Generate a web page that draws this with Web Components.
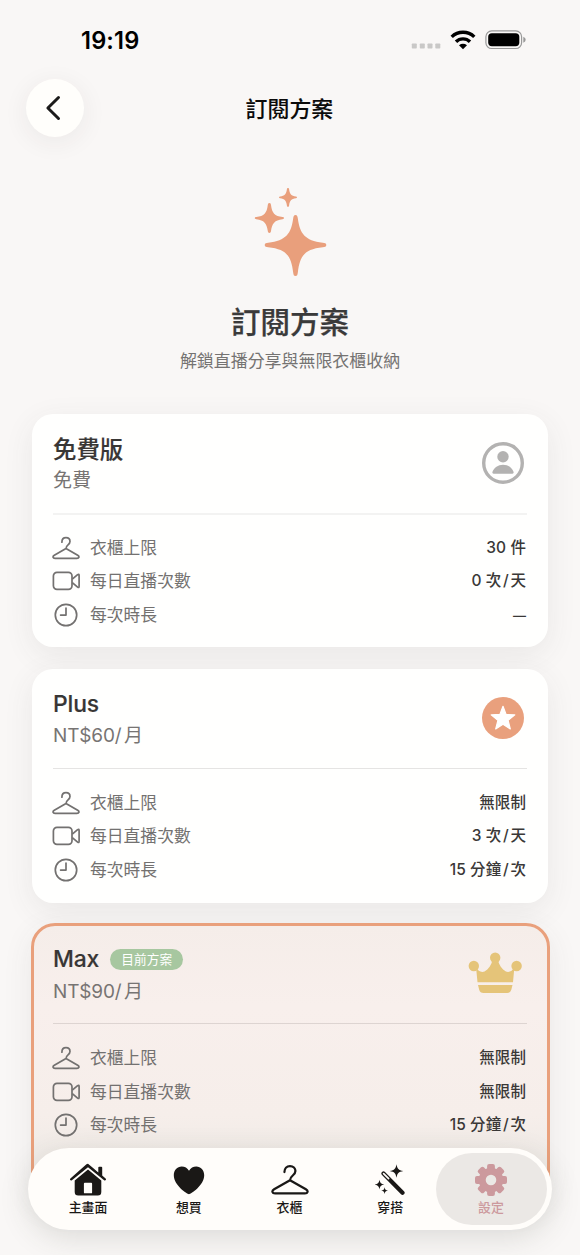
<!DOCTYPE html>
<html lang="zh-Hant">
<head>
<meta charset="utf-8">
<title>訂閱方案</title>
<style>
html,body{margin:0;height:1255px;overflow:hidden;background:#f9f7f6}
body{font-family:Inter,"Noto Sans CJK TC",sans-serif;color:#3a3a3a}
</style>
</head>
<body>
<subscription-screen></subscription-screen>
<script>
const define = (name, html) => customElements.define(name, class extends HTMLElement {
  constructor() {
    super();
    const t = document.createElement('template');
    t.innerHTML = typeof html === 'function' ? html(this) : html;
    this.attachShadow({mode: 'open'}).append(t.content.cloneNode(true));
  }
});

const hangerPath = '<path d="M9.9 6.2C9.9 3.4 11.6 1.6 14 1.6c2.4 0 4 1.7 4 3.8 0 3.5-4 3.3-4 7L2.3 19.3C.2 20.6.9 22.4 3 22.4h22c2.1 0 2.8-1.8.7-3.1L14 12.4" fill="none" stroke="currentColor" stroke-linecap="round" stroke-linejoin="round"/>';
const tooth = [0,45,90,135,180,225,270,315].map(a => `<rect x="12.1" y="0" width="7.8" height="9" rx="2" transform="rotate(${a} 16 16)"/>`).join('');
const icons = {
  hanger: [28, 24, `<g stroke-width="1.7">${hangerPath}</g>`],
  hangerLarge: [38, 32, `<g transform="scale(1.357 1.31)" stroke-width="1.65">${hangerPath}</g>`],
  video: [28, 20, '<g fill="none" stroke="currentColor" stroke-width="1.7" stroke-linejoin="round"><rect x="1.400" y="1.400" width="18.600" height="17" rx="3.600"/><path d="M20.300 8.200 25.600 3.700Q27.100 2.600 27.100 4.500V15.300Q27.100 17.200 25.600 16.100L20.300 11.600"/></g>'],
  clock: [24, 24, '<g fill="none" stroke="currentColor" stroke-width="1.7" stroke-linecap="round" stroke-linejoin="round"><circle cx="12" cy="12" r="10.7"/><path d="M12 5v7.1H6.6"/></g>'],
  person: [42, 42, '<circle cx="21" cy="21" r="19.3" fill="none" stroke="currentColor" stroke-width="3.400"/><circle cx="21" cy="14.7" r="5.7" fill="currentColor"/><path d="M11.6 31.7c-1.2 0-1.5-.9-1-2.1 1.4-4 5.500-6.900 10.400-6.900s9 2.900 10.400 6.900c.5 1.200.2 2.100-1 2.100z" fill="currentColor"/>'],
  star: [42, 42, '<circle cx="21" cy="21" r="21" fill="currentColor"/><path d="m21 9.300 3.100 8.100 8.700.5-6.700 5.500 2.200 8.500-7.300-4.700-7.300 4.700 2.200-8.500-6.700-5.500 8.700-.5z" fill="#fff" stroke="#fff" stroke-width="1.200" stroke-linejoin="round"/>'],
  crown: [54, 42, '<g fill="currentColor"><circle cx="5.800" cy="14" r="5.200"/><circle cx="27.200" cy="5.700" r="5.200"/><circle cx="48.600" cy="14" r="5.200"/><path d="M8 15c2 4 4.800 5.700 8.500 4.600 4-2.600 7-6.500 8-11.600h5.400c1 5.100 4 9 8 11.600 3.700 1.100 6.500-.6 8.500-4.600L45 30.300H9.500zM10 33h34.500l-1.200 4.700q-.9 3.300-4.300 3.300H15.500q-3.400 0-4.300-3.300z"/></g>'],
  sparkles: [74, 90, '<g fill="currentColor"><path d="M41.500 28c1.700 0 2 1.300 2.300 3.300 2 15.200 7 22.500 25 24.400 2 .2 3.500.7 3.500 2.300s-1.500 2.100-3.500 2.300c-18 2-23 8.200-25 25.400-.3 2-.600 3.300-2.300 3.300s-2-1.300-2.300-3.300c-2-17.200-7-23.400-25-25.400-2-.2-3.500-.7-3.500-2.300s1.500-2.100 3.500-2.300c18-1.900 23-9.200 25-24.400.3-2 .600-3.300 2.300-3.300zM15.400 16c1.200 0 1.400.9 1.600 2 1 8 3.600 11.200 11.500 12 .9.100 1.500.4 1.500 1.100s-.600 1-1.500 1.100c-7.900.8-10.500 4.300-11.500 11.900-.2 1.100-.4 1.900-1.600 1.900s-1.400-.8-1.600-1.900c-1-7.600-3.600-11.100-11.500-11.900C1.400 32.100.8 31.800.8 31.100s.600-1 1.500-1.100c7.900-.8 10.500-4 11.500-12 .2-1.100.4-2 1.600-2zM34 1c.8 0 1 .6 1.100 1.300.6 4.700 2.200 6.600 6.800 7.200.700.100 1.100.4 1.100.900s-.4.800-1.100.900c-4.600.600-6.200 2.500-6.800 7.200-.1.700-.3 1.300-1.100 1.300s-1-.6-1.100-1.300c-.6-4.700-2.200-6.600-6.800-7.200-.700-.100-1.100-.4-1.100-.900s.4-.8 1.100-.900c4.600-.600 6.200-2.500 6.800-7.200C33 1.600 33.200 1 34 1z"/></g>'],
  back: [20, 28, '<path d="M15.500 3.500 4.900 14 15.500 24.500" fill="none" stroke="currentColor" stroke-width="3" stroke-linecap="round" stroke-linejoin="round"/>'],
  dots: [30, 6, '<g fill="#c9c8c7"><rect x=".8" y=".5" width="5" height="5" rx=".7"/><rect x="8.800" y=".5" width="5" height="5" rx=".7"/><rect x="16.500" y=".5" width="5" height="5" rx=".7"/><rect x="24.300" y=".5" width="5" height="5" rx=".7"/></g>'],
  wifi: [26, 20, '<g fill="none" stroke="currentColor" stroke-width="3.400"><path d="M1.700 6.900q4.700-4.600 11.300-4.600t11.300 4.600"/><path d="M6 11.800q2.900-2.900 7-2.900t7 2.900"/></g><path d="M9 15.300q4-2.900 8 0l-4 4z" fill="currentColor"/>'],
  battery: [42, 20, '<rect x=".9" y=".9" width="35.700" height="17.600" rx="5.800" fill="none" stroke="#999" stroke-width="1.200"/><rect x="3.200" y="3.200" width="31.100" height="13" rx="3.700" fill="#000"/><path d="M38.300 6.700q2.400.8 2.400 3t-2.400 3z" fill="#999"/>'],
  home: [38, 34, '<g fill="currentColor"><path d="m19 .8 4.800 4 5.500 4.700V4.600q0-.8.900-.8h2.100q.9 0 .9.800v8l3.400 2.900q.9.800.2 1.600t-1.700.1L19 4.200 2.900 17.200q-1 .7-1.700-.1t.2-1.600L16.600 2.100Q18 .8 19 .8z"/><path fill-rule="evenodd" d="m19 6.600 13.300 10.900V29q0 3.500-3.500 3.500H9.200q-3.500 0-3.500-3.500V17.500zm-3.200 13.200q-.9 0-.9.900v8.700q0 .9.900.9h6.400q.9 0 .9-.9v-8.700q0-.9-.9-.9z"/></g>'],
  heart: [32, 30, '<path d="M16 29.200C14 29.200.8 20.200.8 10.300.8 5 4.200 1.500 8.700 1.500c3.100 0 5.700 1.500 7.300 4.200 1.600-2.700 4.200-4.200 7.300-4.200 4.500 0 7.900 3.500 7.900 8.800C31.200 20.200 18 29.200 16 29.200z" fill="currentColor"/>'],
  wand: [30, 32, '<path d="M8.500 9.500 27.500 28.700" stroke="currentColor" stroke-width="4.200" stroke-linecap="round"/><path d="m8.600 9.600 5 5" stroke="#fffdfa" stroke-width="1.700" stroke-linecap="round"/><g fill="currentColor"><path d="M21.500.2c1 4.900 1.900 5.800 6.800 6.800-4.900 1-5.800 1.900-6.800 6.800-1-4.900-1.900-5.800-6.800-6.800 4.900-1 5.800-1.900 6.800-6.800zM4.500 15.800c.7 3.400 1.400 4.100 4.800 4.800-3.400.7-4.100 1.400-4.800 4.800-.7-3.400-1.400-4.100-4.800-4.800 3.400-.7 4.100-1.400 4.800-4.800zM9.600 23.200c.5 2.500 1 3 3.400 3.400-2.400.5-2.900 1-3.400 3.400-.5-2.400-1-2.900-3.400-3.400 2.400-.4 2.900-.9 3.400-3.400z"/></g>'],
  gear: [32, 32, `<g fill="currentColor">${tooth}</g><circle cx="16" cy="16" r="8.800" fill="none" stroke="currentColor" stroke-width="7"/>`]
};
define('app-icon', el => {
  const [w, h, body] = icons[el.getAttribute('name')];
  return `<style>:host{display:inline-flex;flex:none}svg{display:block}</style><svg width="${w}" height="${h}" viewBox="0 0 ${w} ${h}">${body}</svg>`;
});

define('status-bar', `<style>
:host{display:flex;height:79px;box-sizing:border-box;padding:0 53px 0 81px;justify-content:space-between;align-items:center;color:#000}
time{font-size:23.600px;font-weight:600;letter-spacing:.15px;line-height:30px;margin-top:3px}
div{display:flex;align-items:center;gap:9px}
.dots{margin-top:13px}
</style><time>19:19</time><div><app-icon class="dots" name="dots"></app-icon><app-icon name="wifi"></app-icon><app-icon name="battery"></app-icon></div>`);

define('nav-header', `<style>
:host{display:grid;grid-template-columns:58px 1fr 58px;height:58px;padding:0 27.600px 0 26.400px;align-items:center}
button{all:unset;width:58px;height:58px;border-radius:50%;background:#fffefb;box-shadow:0 5px 26px rgba(60,40,40,.07);display:flex;align-items:center;justify-content:center;color:#1c1b1a}
app-icon{margin-right:4px}
h1{margin:2px 0 0;text-align:center;font-size:21.900px;font-weight:500;line-height:30px;color:#0b0b0b;-webkit-text-stroke:.1px}
</style><button aria-label="返回"><app-icon name="back"></app-icon></button><h1><slot></slot></h1>`);

define('plan-hero', `<style>
:host{display:flex;flex-direction:column;align-items:center;padding-top:50px;height:226.600px}
app-icon{color:#e99f7c;margin-left:1.500px}
h2{margin:25px 0 0;font-size:29.500px;font-weight:500;line-height:40px;-webkit-text-stroke:.25px}
p{margin:9px 0 0;font-size:16.950px;line-height:20px;color:#757372}
</style><app-icon name="sparkles"></app-icon><h2><slot name="title"></slot></h2><p><slot name="subtitle"></slot></p>`);

define('plan-card', el => `<style>
:host{display:block;box-sizing:border-box;height:233.700px;padding:19px 21px 0;margin:0 32px 21.600px;border-radius:21px;background:#fffffe;box-shadow:0 8px 30px rgba(70,75,65,.085)}
:host([current]){height:277px;margin:-1.300px 30.500px 0;padding:17.300px 19.500px 0;border:3px solid #e9a07c;border-radius:24px;background:linear-gradient(#f5ede9,#f8efec 80px,#f6eeea 190px,#f0ebe7 225px)}
header{display:flex;justify-content:space-between;height:80px}
.name{display:flex;align-items:center;gap:11px;height:31px;margin-top:1px}
h3{margin:0;font-size:23.400px;line-height:31px;font-weight:500;color:#383635;-webkit-text-stroke:.15px}
:host([latin]) h3{letter-spacing:-.15px;font-size:22.900px}
.price{font-size:19px;line-height:30px;height:30px;margin-top:1.500px;color:#777473}
:host([latin]) .price{letter-spacing:-.15px}
.mark{margin:9px 3.500px 0 0}
:host([current]) .mark{margin:9.300px 5px 0 0}
hr{margin:0;border:0;height:1px;background:#e5e4e3}
:host(:not([latin])) hr{height:2px;margin-bottom:-1px;background:#f3f3f2}
:host([current]) hr{background:#ddd4d1}
section{padding-top:17.200px;display:grid;grid-auto-rows:33.500px}
</style><header><div><div class="name"><h3><slot name="name"></slot></h3><slot name="badge"></slot></div><div class="price"><slot name="price"></slot></div></div><app-icon class="mark" name="${el.getAttribute('mark')}" style="color:${el.getAttribute('tint')}"></app-icon></header><hr><section><slot></slot></section>`);

define('plan-badge', `<style>:host{display:block;height:21px;line-height:21px;padding:0 11px;border-radius:11px;background:#a7c7a0;color:#fff;font-size:12.700px;letter-spacing:.1px}</style><slot></slot>`);

define('plan-feature', el => `<style>
:host{display:flex;align-items:center;height:33.500px;color:#737170}
.i{width:27px;display:flex;justify-content:center;margin:0 11px 0 -1px}
.l{font-size:16.800px;line-height:24px;flex:1}
.v{font-size:15.500px;line-height:24px;font-weight:500;letter-spacing:.08px;color:#3a3837;margin-right:1px}
</style><span class="i"><app-icon name="${el.getAttribute('icon')}"></app-icon></span><span class="l"><slot></slot></span><span class="v"><slot name="value"></slot></span>`);

define('tab-item', el => `<style>
:host{display:flex;flex-direction:column;align-items:center;box-sizing:border-box;width:111px;height:72px;margin:0 -5.150px;border-radius:36px;color:#1a1816}
:host([active]){background:#ebe8e5;color:#cc999d;margin:0 -6.150px 0 -4.150px;padding-right:2px}
.i{height:38px;margin-top:8px;display:flex;align-items:center}
.l{font-size:12.900px;font-weight:500;line-height:18px}
</style><span class="i"><app-icon name="${el.getAttribute('icon')}"></app-icon></span><span class="l"><slot></slot></span>`);

define('tab-bar', `<style>:host{display:flex;box-sizing:border-box;justify-content:center;align-items:center;height:82px;width:524px;padding-right:1px;border-radius:41px;background:#fffdfa;box-shadow:0 8px 30px rgba(60,65,55,.15)}</style><slot></slot>`);

define('subscription-screen', `<style>
:host{display:block;position:relative;height:1255px;overflow:hidden}
tab-bar{position:absolute;left:28px;top:1148px}
.slash{margin:0 1.500px 0 1.800px}
.dash{font-size:13px}
</style>
<status-bar></status-bar>
<nav-header>訂閱方案</nav-header>
<plan-hero><span slot="title">訂閱方案</span><span slot="subtitle">解鎖直播分享與無限衣櫃收納</span></plan-hero>
<plan-card mark="person" tint="#b3b2b1"><span slot="name">免費版</span><span slot="price">免費</span>
<plan-feature icon="hanger">衣櫃上限<span slot="value">30 件</span></plan-feature>
<plan-feature icon="video">每日直播次數<span slot="value">0 次<span class="slash">/</span>天</span></plan-feature>
<plan-feature icon="clock">每次時長<span slot="value" class="dash">—</span></plan-feature></plan-card>
<plan-card latin mark="star" tint="#e9a07d"><span slot="name">Plus</span><span slot="price">NT$60/<span style="margin-left:2.500px">月</span></span>
<plan-feature icon="hanger">衣櫃上限<span slot="value">無限制</span></plan-feature>
<plan-feature icon="video">每日直播次數<span slot="value">3 次<span class="slash">/</span>天</span></plan-feature>
<plan-feature icon="clock">每次時長<span slot="value">15 分鐘<span class="slash">/</span>次</span></plan-feature></plan-card>
<plan-card latin current mark="crown" tint="#e5c479"><span slot="name">Max</span><plan-badge slot="badge">目前方案</plan-badge><span slot="price">NT$90/<span style="margin-left:2.500px">月</span></span>
<plan-feature icon="hanger">衣櫃上限<span slot="value">無限制</span></plan-feature>
<plan-feature icon="video">每日直播次數<span slot="value">無限制</span></plan-feature>
<plan-feature icon="clock">每次時長<span slot="value">15 分鐘<span class="slash">/</span>次</span></plan-feature></plan-card>
<tab-bar><tab-item icon="home">主畫面</tab-item><tab-item icon="heart">想買</tab-item><tab-item icon="hangerLarge">衣櫃</tab-item><tab-item icon="wand">穿搭</tab-item><tab-item icon="gear" active>設定</tab-item></tab-bar>`);
</script>
</body>
</html>
